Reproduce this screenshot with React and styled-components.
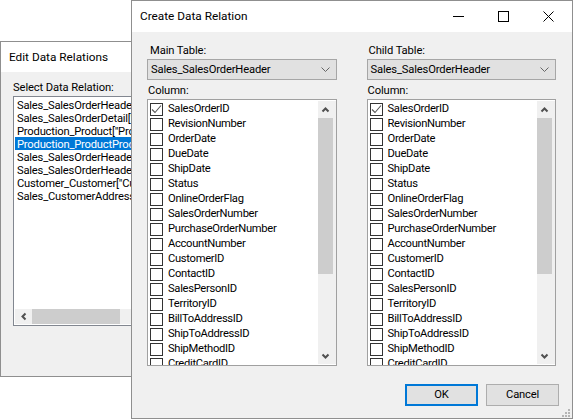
import React from "react";
import styled, { createGlobalStyle } from "styled-components";

const Global = createGlobalStyle`
  html, body { margin: 0; padding: 0; background: #fff; }
  #root { width: 573px; height: 419px; }
`;

const Desktop = styled.div`
  position: relative;
  width: 573px;
  height: 419px;
  overflow: hidden;
  background: #fff;
  font-family: Roboto, "Liberation Sans", sans-serif;
  font-size: 11.2px;
  color: #000;
`;

const Window = styled.div`
  position: absolute;
  left: ${(p) => p.$x}px;
  top: ${(p) => p.$y}px;
  width: ${(p) => p.$w}px;
  height: ${(p) => p.$h}px;
  box-sizing: border-box;
  border: 1px solid #8f8f8f;
  background: #f0f0f0;
  display: flex;
  flex-direction: column;
`;

const TitleBar = styled.div`
  flex: none;
  box-sizing: border-box;
  height: ${(p) => p.$h}px;
  background: #fff;
  display: flex;
  align-items: center;
  padding: 0 1px 1px ${(p) => p.$pad}px;
  font-size: 11.8px;
`;

const TitleText = styled.span`
  flex: 1;
`;

const CaptionButton = styled.div`
  width: 45px;
  height: 30px;
  display: flex;
  align-items: center;
  justify-content: center;
`;

const BackBody = styled.div`
  flex: 1;
  min-height: 0;
  padding: 7px 12px 50px;
  display: flex;
  flex-direction: column;
`;

const Label = styled.div`
  height: 16px;
  line-height: 18px;
  white-space: nowrap;
  letter-spacing: -0.1px;
  padding-left: ${(p) => p.$indent || 0}px;
`;

const RelationList = styled.div`
  flex: 1;
  box-sizing: border-box;
  border: 1px solid #828790;
  background: #fff;
  display: flex;
  flex-direction: column;
  margin-top: 1px;
  width: 300px;
`;

const RelationRows = styled.div`
  flex: 1;
  padding: 1px 1px 0;
`;

const RelationRow = styled.div`
  height: 13px;
  line-height: 15px;
  padding-left: 2px;
  white-space: nowrap;
  letter-spacing: -0.2px;
  background: ${(p) => (p.$selected ? "#0078d7" : "transparent")};
  color: ${(p) => (p.$selected ? "#fff" : "#000")};
`;

const HScroll = styled.div`
  flex: none;
  height: 15px;
  margin: 0 0 1px 1px;
  background: #f0f0f0;
  display: flex;
  align-items: center;
`;

const HArrow = styled.div`
  width: 17px;
  height: 15px;
  display: flex;
  align-items: center;
  justify-content: center;
`;

const HThumb = styled.div`
  width: 88px;
  height: 15px;
  background: #cdcdcd;
`;

const FrontBody = styled.div`
  flex: 1;
  min-height: 0;
  display: flex;
  flex-direction: column;
  padding: 10px 16px 0 15px;
`;

const Columns = styled.div`
  flex: none;
  display: flex;
  gap: 30px;
`;

const Column = styled.div`
  width: 190px;
  display: flex;
  flex-direction: column;
`;

const Combo = styled.div`
  box-sizing: border-box;
  height: 21px;
  margin: 1px 0 2px;
  border: 1px solid #a6a6a6;
  background: #e1e1e1;
  display: flex;
  align-items: center;
  justify-content: space-between;
  padding: 0 6px 0 3px;
  white-space: nowrap;
  letter-spacing: -0.15px;
`;

const CheckList = styled.div`
  box-sizing: border-box;
  height: 267px;
  margin-top: 1px;
  border: 1px solid #a0a0a0;
  background: #fff;
  display: flex;
  overflow: hidden;
`;

const Rows = styled.div`
  flex: 1;
  min-width: 0;
  overflow: hidden;
  padding: 2px 0 0 2px;
`;

const CheckRow = styled.div`
  height: 15px;
  display: flex;
  align-items: center;
  gap: 5px;
  white-space: nowrap;
`;

const CheckName = styled.span`
  padding-bottom: 2px;
  letter-spacing: -0.3px;
`;

const Box = styled.div`
  flex: none;
  box-sizing: border-box;
  width: 13px;
  height: 13px;
  border: 1px solid #333;
  background: #fff;
  display: flex;
  align-items: center;
  justify-content: center;
`;

const VScroll = styled.div`
  flex: none;
  width: 18px;
  margin: 1px 0 1px 0;
  background: #f0f0f0;
  display: flex;
  flex-direction: column;
`;

const VArrow = styled.div`
  flex: none;
  height: 17px;
  width: 15px;
  display: flex;
  align-items: center;
  justify-content: center;
`;

const VThumb = styled.div`
  flex: none;
  width: 15px;
  height: 156px;
  background: #cdcdcd;
`;

const VTrack = styled.div`
  flex: 1;
`;

const Footer = styled.div`
  position: relative;
  flex: 1;
  display: flex;
  justify-content: flex-end;
  gap: 8px;
  padding: 18px 0 0;
  margin-right: -3px;
`;

const Button = styled.div`
  box-sizing: border-box;
  width: 73px;
  height: 22px;
  padding-bottom: 2px;
  letter-spacing: -0.2px;
  background: #e1e1e1;
  border: ${(p) => (p.$primary ? "2px solid #0078d7" : "1px solid #adadad")};
  display: flex;
  align-items: center;
  justify-content: center;
`;

const Grip = styled.svg`
  position: absolute;
  right: -12px;
  bottom: 0;
`;

const Chevron = ({ dir }) => {
  const d = {
    up: "M1.5 5.5 L4.5 2.5 L7.5 5.5",
    down: "M1.5 2.5 L4.5 5.5 L7.5 2.5",
  }[dir];
  return (
    <svg width="9" height="8" viewBox="0 0 9 8">
      <path d={d} fill="none" stroke="#505050" strokeWidth="2" />
    </svg>
  );
};

const columns = [
  "SalesOrderID", "RevisionNumber", "OrderDate", "DueDate", "ShipDate", "Status",
  "OnlineOrderFlag", "SalesOrderNumber", "PurchaseOrderNumber", "AccountNumber",
  "CustomerID", "ContactID", "SalesPersonID", "TerritoryID", "BillToAddressID",
  "ShipToAddressID", "ShipMethodID", "CreditCardID",
];

const relations = [
  'Sales_SalesOrderHeader["ProductID"]',
  'Sales_SalesOrderDetail["SalesOrderID"]',
  'Production_Product["ProductID"]',
  'Production_ProductProductPhoto["ProductID"]',
  'Sales_SalesOrderHeader["CustomerID"]',
  'Sales_SalesOrderHeader["ContactID"]',
  'Customer_Customer["CustomerID"]',
  'Sales_CustomerAddress["CustomerID"]',
];

const TablePanel = ({ label, indent }) => (
  <Column>
    <Label $indent={indent}>{label}</Label>
    <Combo>
      Sales_SalesOrderHeader
      <svg width="9" height="6" viewBox="0 0 9 6">
        <path d="M0.5 0.5 L4.5 4.5 L8.5 0.5" fill="none" stroke="#666" strokeWidth="1" />
      </svg>
    </Combo>
    <Label $indent={1}>Column:</Label>
    <CheckList>
      <Rows>
        {columns.map((name, i) => (
          <CheckRow key={name}>
            <Box>
              {i === 0 && (
                <svg width="11" height="11" viewBox="0 0 11 11">
                  <path d="M1 5.5 L4 8.5 L10 1.5" fill="none" stroke="#555" strokeWidth="1.1" />
                </svg>
              )}
            </Box>
            <CheckName>{name}</CheckName>
          </CheckRow>
        ))}
      </Rows>
      <VScroll>
        <VArrow><Chevron dir="up" /></VArrow>
        <VThumb />
        <VTrack />
        <VArrow><Chevron dir="down" /></VArrow>
      </VScroll>
    </CheckList>
  </Column>
);

export default function App() {
  return (
    <Desktop>
      <Global />
      <Window $x={0} $y={41} $w={400} $h={336}>
        <TitleBar $h={30} $pad={8}>Edit Data Relations</TitleBar>
        <BackBody>
          <Label>Select Data Relation:</Label>
          <RelationList>
            <RelationRows>
              {relations.map((r, i) => (
                <RelationRow key={r} $selected={i === 3}>{r}</RelationRow>
              ))}
            </RelationRows>
            <HScroll>
              <HArrow>
                <svg width="8" height="9" viewBox="0 0 8 9">
                  <path d="M5.5 1.5 L2.5 4.5 L5.5 7.5" fill="none" stroke="#505050" strokeWidth="2" />
                </svg>
              </HArrow>
              <HThumb />
            </HScroll>
          </RelationList>
        </BackBody>
      </Window>
      <Window $x={131} $y={0} $w={442} $h={419}>
        <TitleBar $h={31} $pad={8}>
          <TitleText>Create Data Relation</TitleText>
          <CaptionButton>
            <svg width="11" height="11" viewBox="0 0 11 11">
              <path d="M0 5.5 H11" stroke="#000" strokeWidth="1" />
            </svg>
          </CaptionButton>
          <CaptionButton>
            <svg width="11" height="11" viewBox="0 0 11 11">
              <rect x="0.5" y="0.5" width="10" height="10" fill="none" stroke="#000" strokeWidth="1" />
            </svg>
          </CaptionButton>
          <CaptionButton>
            <svg width="11" height="11" viewBox="0 0 11 11">
              <path d="M0.5 0.5 L10.5 10.5 M10.5 0.5 L0.5 10.5" stroke="#000" strokeWidth="1" />
            </svg>
          </CaptionButton>
        </TitleBar>
        <FrontBody>
          <Columns>
            <TablePanel label="Main Table:" indent={3} />
            <TablePanel label="Child Table:" indent={2} />
          </Columns>
          <Footer>
            <Button $primary>OK</Button>
            <Button>Cancel</Button>
            <Grip width="10" height="10" viewBox="0 0 10 10">
              <g fill="#b5b5b5">
                <rect x="7" y="1" width="2" height="2" />
                <rect x="4" y="4" width="2" height="2" />
                <rect x="7" y="4" width="2" height="2" />
                <rect x="1" y="7" width="2" height="2" />
                <rect x="4" y="7" width="2" height="2" />
                <rect x="7" y="7" width="2" height="2" />
              </g>
            </Grip>
          </Footer>
        </FrontBody>
      </Window>
    </Desktop>
  );
}
